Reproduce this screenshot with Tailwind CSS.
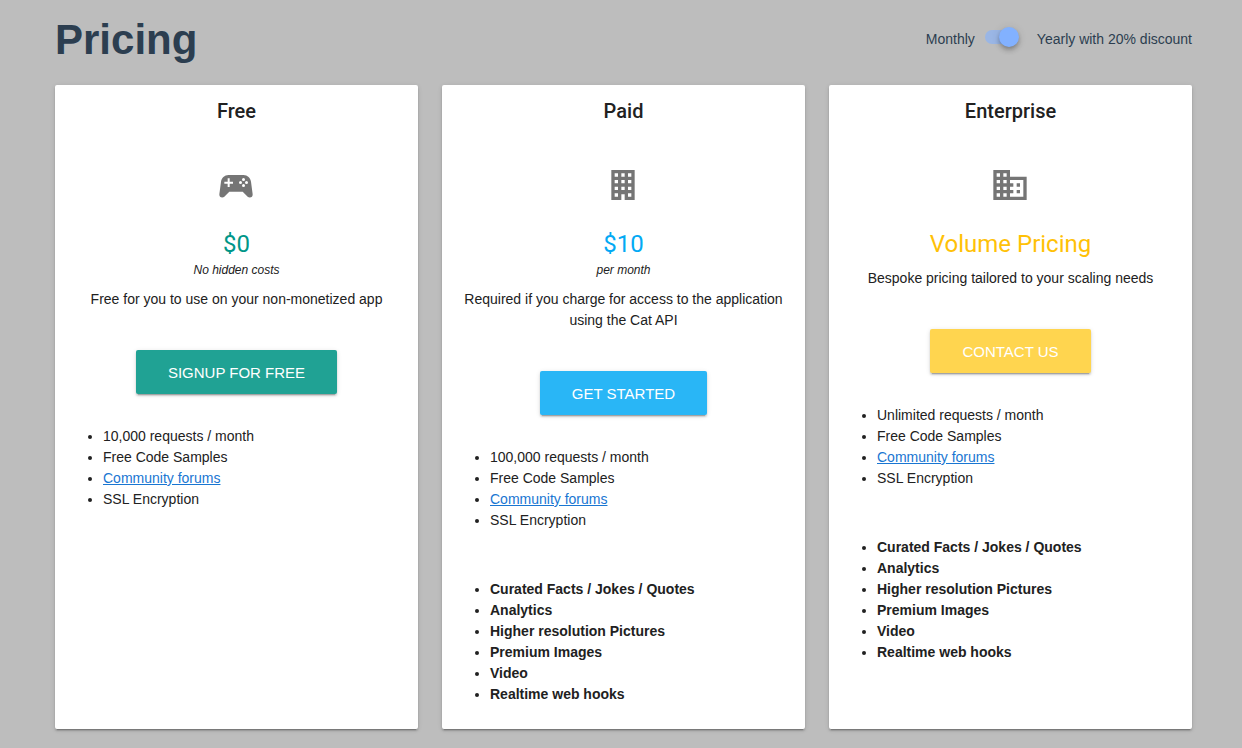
<!DOCTYPE html>
<html lang="en">
<head>
<meta charset="utf-8">
<meta name="viewport" content="width=device-width, initial-scale=1">
<title>Pricing</title>
<script src="https://cdn.jsdelivr.net/npm/@tailwindcss/browser@4"></script>
</head>
<body class="min-h-screen bg-[#bdbdbd] pl-[55px] pr-[50px] pb-5 font-['Liberation_Sans',Arial,sans-serif] text-sm leading-[21px] text-[#212121]">
<header class="flex items-center justify-between pt-2 pb-[13px] text-[#2c3e50]">
  <h1 class="text-[42px] leading-[64px] font-bold">Pricing</h1>
  <div class="flex items-center pb-0.5">
    <label for="billing">Monthly</label>
    <span class="relative ml-2.5 mr-4 mb-1 flex h-5 w-9 items-center">
      <input id="billing" type="checkbox" role="switch" checked aria-label="Yearly billing" class="peer h-3.5 w-7 appearance-none rounded-full bg-[#82b1ff]/60">
      <span class="pointer-events-none absolute top-0 left-0 size-5 rounded-full bg-[#82b1ff] shadow-[0_2px_4px_-1px_rgba(0,0,0,0.2),0_4px_5px_rgba(0,0,0,0.14),0_1px_10px_rgba(0,0,0,0.12)] peer-checked:left-3.5"></span>
    </span>
    <label for="billing">Yearly with 20% discount</label>
  </div>
</header>
<main class="grid grid-cols-3 gap-6">
  <section class="flex flex-col items-center rounded-xs bg-white pt-4 pb-6 shadow-[0_3px_1px_-2px_rgba(0,0,0,0.2),0_2px_2px_rgba(0,0,0,0.14),0_1px_5px_rgba(0,0,0,0.12)]">
    <h2 class="font-[Roboto,sans-serif] text-xl leading-5 font-medium">Free</h2>
    <svg class="mt-11 mr-px size-10 fill-[#757575]" viewBox="0 0 24 24" aria-hidden="true"><path d="M7.97,16L5,19C4.67,19.3 4.23,19.5 3.75,19.5A1.75,1.75 0 0,1 2,17.75V17.5L3,10.12C3.21,7.81 5.14,6 7.5,6H16.5C18.86,6 20.79,7.81 21,10.12L22,17.5V17.75A1.75,1.75 0 0,1 20.25,19.5C19.77,19.5 19.33,19.3 19,19L16.03,16H7.97M7,8V10H5V11.2H7V13.2H8.2V11.2H10.2V10H8.2V8H7M16.5,7.8A0.9,0.9 0 0,0 15.6,8.7A0.9,0.9 0 0,0 16.5,9.6A0.9,0.9 0 0,0 17.4,8.7A0.9,0.9 0 0,0 16.5,7.8M14.7,9.6A0.9,0.9 0 0,0 13.8,10.5A0.9,0.9 0 0,0 14.7,11.4A0.9,0.9 0 0,0 15.6,10.5A0.9,0.9 0 0,0 14.7,9.6M18.3,9.6A0.9,0.9 0 0,0 17.4,10.5A0.9,0.9 0 0,0 18.3,11.4A0.9,0.9 0 0,0 19.2,10.5A0.9,0.9 0 0,0 18.3,9.6M16.5,11.4A0.9,0.9 0 0,0 15.6,12.3A0.9,0.9 0 0,0 16.5,13.2A0.9,0.9 0 0,0 17.4,12.3A0.9,0.9 0 0,0 16.5,11.4Z"/></svg>
    <p class="mt-[23px] font-[Roboto,sans-serif] text-2xl leading-8 text-[#009688]">$0</p>
    <p class="text-xs leading-[21px] italic">No hidden costs</p>
    <p class="mt-2 px-4 text-center">Free for you to use on your non-monetized app</p>
    <button type="button" class="mt-10 h-11 rounded-xs bg-[#20a294] px-8 text-[15px] text-white shadow-[0_3px_1px_-2px_rgba(0,0,0,0.2),0_2px_2px_rgba(0,0,0,0.14),0_1px_5px_rgba(0,0,0,0.12)]">SIGNUP FOR FREE</button>
    <ul class="mt-8 list-disc self-stretch pr-4 pl-12">
      <li>10,000 requests / month</li>
      <li>Free Code Samples</li>
      <li><a href="#" class="text-[#1976d2] underline">Community forums</a></li>
      <li>SSL Encryption</li>
    </ul>
  </section>
  <section class="flex flex-col items-center rounded-xs bg-white pt-4 pb-6 shadow-[0_3px_1px_-2px_rgba(0,0,0,0.2),0_2px_2px_rgba(0,0,0,0.14),0_1px_5px_rgba(0,0,0,0.12)]">
    <h2 class="font-[Roboto,sans-serif] text-xl leading-5 font-medium">Paid</h2>
    <svg class="mt-11 mr-px size-10 fill-[#757575]" viewBox="0 0 24 24" aria-hidden="true"><path d="M5,3V21H11V17.5H13V21H19V3H5M7,5H9V7H7V5M11,5H13V7H11V5M15,5H17V7H15V5M7,9H9V11H7V9M11,9H13V11H11V9M15,9H17V11H15V9M7,13H9V15H7V13M11,13H13V15H11V13M15,13H17V15H15V13M7,17H9V19H7V17M15,17H17V19H15V17Z"/></svg>
    <p class="mt-[23px] font-[Roboto,sans-serif] text-2xl leading-8 text-[#03a9f4]">$10</p>
    <p class="text-xs leading-[21px] italic">per month</p>
    <p class="mt-2 px-4 text-center">Required if you charge for access to the application using the Cat API</p>
    <button type="button" class="mt-10 h-11 rounded-xs bg-[#29b6f6] px-8 text-[15px] text-white shadow-[0_3px_1px_-2px_rgba(0,0,0,0.2),0_2px_2px_rgba(0,0,0,0.14),0_1px_5px_rgba(0,0,0,0.12)]">GET STARTED</button>
    <ul class="mt-8 list-disc self-stretch pr-4 pl-12">
      <li>100,000 requests / month</li>
      <li>Free Code Samples</li>
      <li><a href="#" class="text-[#1976d2] underline">Community forums</a></li>
      <li>SSL Encryption</li>
    </ul>
    <ul class="mt-12 list-disc self-stretch pr-4 pl-12 font-bold">
      <li>Curated Facts / Jokes / Quotes</li>
      <li>Analytics</li>
      <li>Higher resolution Pictures</li>
      <li>Premium Images</li>
      <li>Video</li>
      <li>Realtime web hooks</li>
    </ul>
  </section>
  <section class="flex flex-col items-center rounded-xs bg-white pt-4 pb-6 shadow-[0_3px_1px_-2px_rgba(0,0,0,0.2),0_2px_2px_rgba(0,0,0,0.14),0_1px_5px_rgba(0,0,0,0.12)]">
    <h2 class="font-[Roboto,sans-serif] text-xl leading-5 font-medium">Enterprise</h2>
    <svg class="mt-11 mr-px size-10 fill-[#757575]" viewBox="0 0 24 24" aria-hidden="true"><path d="M18,15H16V17H18M18,11H16V13H18M20,19H12V17H14V15H12V13H14V11H12V9H20M10,7H8V5H10M10,11H8V9H10M10,15H8V13H10M10,19H8V17H10M6,7H4V5H6M6,11H4V9H6M6,15H4V13H6M6,19H4V17H6M12,7V3H2V21H22V7H12Z"/></svg>
    <p class="mt-[23px] font-[Roboto,sans-serif] text-2xl leading-8 text-[#ffc107]">Volume Pricing</p>
    <p class="mt-2 px-4 text-center">Bespoke pricing tailored to your scaling needs</p>
    <button type="button" class="mt-10 h-11 rounded-xs bg-[#ffd54f] px-8 text-[15px] text-white shadow-[0_3px_1px_-2px_rgba(0,0,0,0.2),0_2px_2px_rgba(0,0,0,0.14),0_1px_5px_rgba(0,0,0,0.12)]">CONTACT US</button>
    <ul class="mt-8 list-disc self-stretch pr-4 pl-12">
      <li>Unlimited requests / month</li>
      <li>Free Code Samples</li>
      <li><a href="#" class="text-[#1976d2] underline">Community forums</a></li>
      <li>SSL Encryption</li>
    </ul>
    <ul class="mt-12 list-disc self-stretch pr-4 pl-12 font-bold">
      <li>Curated Facts / Jokes / Quotes</li>
      <li>Analytics</li>
      <li>Higher resolution Pictures</li>
      <li>Premium Images</li>
      <li>Video</li>
      <li>Realtime web hooks</li>
    </ul>
  </section>
</main>
</body>
</html>
